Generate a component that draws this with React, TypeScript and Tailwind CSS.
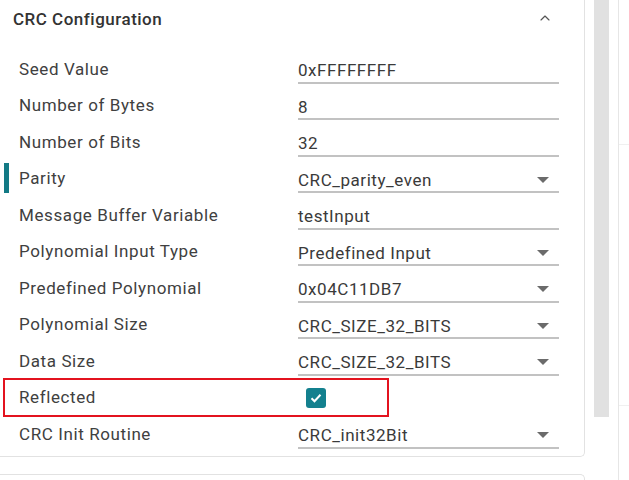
import { ChevronUp } from "lucide-react";

type Row = {
  label: string;
  value?: string;
  select?: boolean;
  checkbox?: boolean;
  active?: boolean;
  highlight?: boolean;
};

const rows: Row[] = [
  { label: "Seed Value", value: "0xFFFFFFFF" },
  { label: "Number of Bytes", value: "8" },
  { label: "Number of Bits", value: "32" },
  { label: "Parity", value: "CRC_parity_even", select: true, active: true },
  { label: "Message Buffer Variable", value: "testInput" },
  { label: "Polynomial Input Type", value: "Predefined Input", select: true },
  { label: "Predefined Polynomial", value: "0x04C11DB7", select: true },
  { label: "Polynomial Size", value: "CRC_SIZE_32_BITS", select: true },
  { label: "Data Size", value: "CRC_SIZE_32_BITS", select: true },
  { label: "Reflected", checkbox: true, highlight: true },
  { label: "CRC Init Routine", value: "CRC_init32Bit", select: true },
];

function Field({ value, select }: { value: string; select?: boolean }) {
  return (
    <div className="w-[261px] h-[29px] flex items-center justify-between border-b-2 border-[#c2c2c2] pt-1">
      <span className="text-[17px] leading-6 tracking-[0.55px] text-[#3a3a3a]">{value}</span>
      {select && (
        <svg width="12" height="6" viewBox="0 0 12 6" className="mr-[10px]">
          <path d="M0 0h12L6 6z" fill="#6b6b6b" />
        </svg>
      )}
    </div>
  );
}

function Checkbox() {
  return (
    <div className="ml-2 w-[20px] h-[20px] rounded-[3px] bg-[#13808e] flex items-center justify-center">
      <svg width="14" height="14" viewBox="0 0 14 14">
        <path d="M2.5 7.2l3 3 6-6.4" fill="none" stroke="#fff" strokeWidth="2" />
      </svg>
    </div>
  );
}

function ConfigRow({ row }: { row: Row }) {
  return (
    <div className="relative h-[36.5px] flex items-center">
      {row.active && (
        <div className="absolute left-[4px] top-[2px] bottom-[4px] w-[5px] bg-[#137a85]" />
      )}
      {row.highlight && (
        <div className="absolute left-[3px] -top-[2px] w-[386px] h-[39px] border-2 border-[#e3131f]" />
      )}
      <div className="w-[298px] pl-[19px] text-[17px] tracking-[0.6px] text-[#404040]">
        {row.label}
      </div>
      {row.checkbox ? <Checkbox /> : <Field value={row.value!} select={row.select} />}
    </div>
  );
}

export default function App() {
  return (
    <div className="w-[629px] h-[480px] bg-white overflow-hidden flex font-['Roboto',sans-serif]">
      {/* Main column */}
      <div className="w-[585px] flex flex-col">
        <div className="h-[457px] border-r border-b border-[#e2e2e2] rounded-br-[5px]">
          <div className="h-[51px] flex items-start justify-between pl-[13px] pr-[31px] pt-[7px]">
            <span className="text-[17px] font-medium tracking-[0.5px] text-[#333]">
              CRC Configuration
            </span>
            <ChevronUp size={16} strokeWidth={1.75} color="#555" className="mt-[3px]" />
          </div>
          {rows.map((r) => (
            <ConfigRow key={r.label} row={r} />
          ))}
        </div>
        <div className="mt-[17px] flex-1 border-t border-r border-[#e2e2e2] rounded-tr-[5px]" />
      </div>

      {/* Scrollbar */}
      <div className="ml-[9px] w-[15px] h-[417px] bg-[#e1e1e1]" />

      {/* Right edge */}
      <div className="ml-[9px] flex-1 border-l border-[#e6e6e6] flex flex-col">
        <div className="h-[144px]" />
        <div className="h-px bg-[#f0f0f0]" />
        <div className="h-[260px]" />
        <div className="h-px bg-[#f0f0f0]" />
      </div>
    </div>
  );
}
